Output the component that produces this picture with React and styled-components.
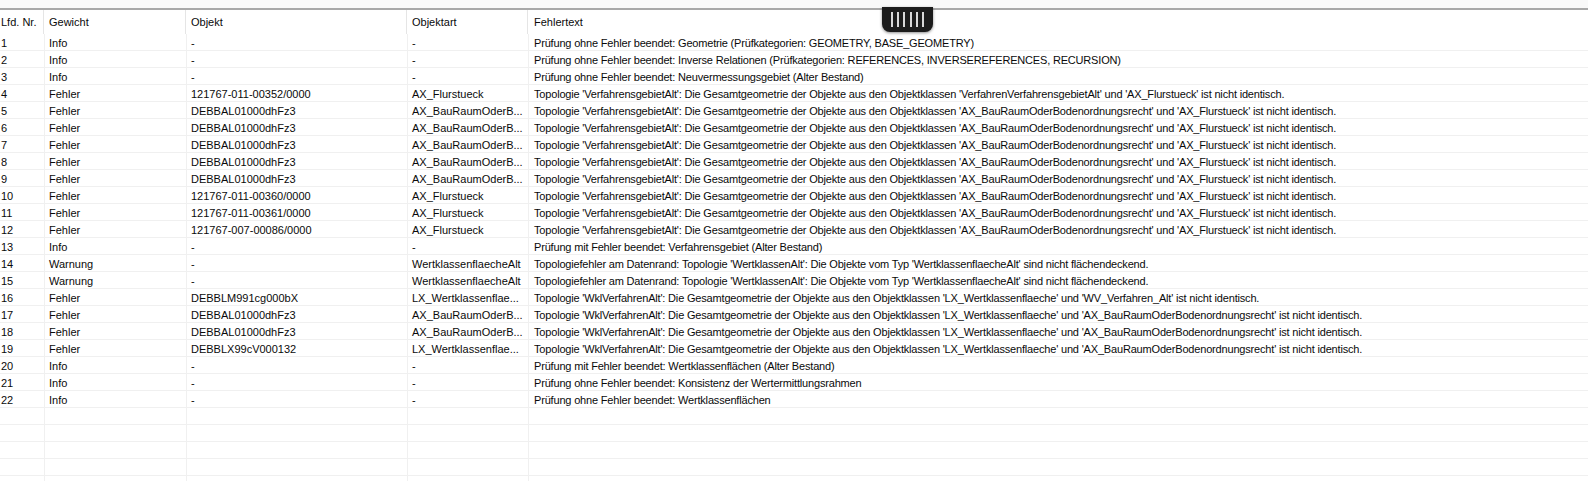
import React from 'react'
import styled, {createGlobalStyle} from 'styled-components'

const GlobalStyle = createGlobalStyle`
    html, body {
        margin: 0;
        padding: 0;
        background: #fff;
        overflow: hidden;
    }
`

const Page = styled.div`
    position: relative;
    width: 1588px;
    height: 481px;
    overflow: hidden;
    background: #fff;
    color: #0a0a0a;
    font-family: "Liberation Sans", Arial, sans-serif;
    font-size: 11px;
`

const TopStrip = styled.div`
    height: 8px;
    background: #f9f9f9;
    border-bottom: 2px solid #a8a8a8;
`

const HeaderRow = styled.div`
    display: grid;
    grid-template-columns: 44px 142px 221px 121px 1fr;
    height: 24px;
`

const HeaderCell = styled.div`
    display: flex;
    align-items: center;
    padding-left: ${p => p.$pad}px;
    border-right: ${p => (p.$last ? 'none' : '1px solid #e5e5e5')};
    white-space: nowrap;
`

const Row = styled.div`
    display: grid;
    grid-template-columns: 45px 142px 221px 121px 1fr;
    height: 17px;
    box-sizing: border-box;
    border-bottom: 1px solid #f0f0f0;
`

const Cell = styled.div`
    display: flex;
    align-items: center;
    padding-left: ${p => p.$pad}px;
    padding-top: 1px;
    border-right: ${p => (p.$last ? 'none' : '1px solid #f0f0f0')};
    letter-spacing: ${p => (p.$last ? '-0.18px' : 'normal')};
    white-space: nowrap;
    overflow: hidden;
`

const Handle = styled.div`
    position: absolute;
    left: 882px;
    top: 7px;
    width: 51px;
    height: 25px;
    display: flex;
    justify-content: center;
    align-items: center;
    gap: 4.4px;
    background: #1c1c1c;
    border-radius: 0 0 8px 8px;
    box-shadow: 0 1px 3px rgba(0, 0, 0, 0.45);
`

const Grip = styled.span`
    width: 2px;
    height: 15px;
    background: #d8d8d8;
`

const BAU = 'AX_BauRaumOderBodenordnungsrecht'
const topo = (a, b) => `Topologie 'VerfahrensgebietAlt': Die Gesamtgeometrie der Objekte aus den Objektklassen '${a}' und '${b}' ist nicht identisch.`
const wkl = b => `Topologie 'WklVerfahrenAlt': Die Gesamtgeometrie der Objekte aus den Objektklassen 'LX_Wertklassenflaeche' und '${b}' ist nicht identisch.`
const rand = "Topologiefehler am Datenrand: Topologie 'WertklassenAlt': Die Objekte vom Typ 'WertklassenflaecheAlt' sind nicht flächendeckend."

const rows = [
    ['Info', '-', '-', 'Prüfung ohne Fehler beendet: Geometrie (Prüfkategorien: GEOMETRY, BASE_GEOMETRY)'],
    ['Info', '-', '-', 'Prüfung ohne Fehler beendet: Inverse Relationen (Prüfkategorien: REFERENCES, INVERSEREFERENCES, RECURSION)'],
    ['Info', '-', '-', 'Prüfung ohne Fehler beendet: Neuvermessungsgebiet (Alter Bestand)'],
    ['Fehler', '121767-011-00352/0000', 'AX_Flurstueck', topo('VerfahrenVerfahrensgebietAlt', 'AX_Flurstueck')],
    ['Fehler', 'DEBBAL01000dhFz3', 'AX_BauRaumOderB...', topo(BAU, 'AX_Flurstueck')],
    ['Fehler', 'DEBBAL01000dhFz3', 'AX_BauRaumOderB...', topo(BAU, 'AX_Flurstueck')],
    ['Fehler', 'DEBBAL01000dhFz3', 'AX_BauRaumOderB...', topo(BAU, 'AX_Flurstueck')],
    ['Fehler', 'DEBBAL01000dhFz3', 'AX_BauRaumOderB...', topo(BAU, 'AX_Flurstueck')],
    ['Fehler', 'DEBBAL01000dhFz3', 'AX_BauRaumOderB...', topo(BAU, 'AX_Flurstueck')],
    ['Fehler', '121767-011-00360/0000', 'AX_Flurstueck', topo(BAU, 'AX_Flurstueck')],
    ['Fehler', '121767-011-00361/0000', 'AX_Flurstueck', topo(BAU, 'AX_Flurstueck')],
    ['Fehler', '121767-007-00086/0000', 'AX_Flurstueck', topo(BAU, 'AX_Flurstueck')],
    ['Info', '-', '-', 'Prüfung mit Fehler beendet: Verfahrensgebiet (Alter Bestand)'],
    ['Warnung', '-', 'WertklassenflaecheAlt', rand],
    ['Warnung', '-', 'WertklassenflaecheAlt', rand],
    ['Fehler', 'DEBBLM991cg000bX', 'LX_Wertklassenflae...', wkl('WV_Verfahren_Alt')],
    ['Fehler', 'DEBBAL01000dhFz3', 'AX_BauRaumOderB...', wkl(BAU)],
    ['Fehler', 'DEBBAL01000dhFz3', 'AX_BauRaumOderB...', wkl(BAU)],
    ['Fehler', 'DEBBLX99cV000132', 'LX_Wertklassenflae...', wkl(BAU)],
    ['Info', '-', '-', 'Prüfung mit Fehler beendet: Wertklassenflächen (Alter Bestand)'],
    ['Info', '-', '-', 'Prüfung ohne Fehler beendet: Konsistenz der Wertermittlungsrahmen'],
    ['Info', '-', '-', 'Prüfung ohne Fehler beendet: Wertklassenflächen'],
]

const headers = [
    ['Lfd. Nr.', 1],
    ['Gewicht', 5],
    ['Objekt', 5],
    ['Objektart', 5],
    ['Fehlertext', 6],
]

const App = () => (
    <Page>
        <GlobalStyle />
        <TopStrip />
        <HeaderRow>
            {headers.map(([label, pad], i) => (
                <HeaderCell key={label} $pad={pad} $last={i === headers.length - 1}>
                    {label}
                </HeaderCell>
            ))}
        </HeaderRow>
        {rows.map(([weight, object, kind, text], i) => (
            <Row key={i}>
                <Cell $pad={1}>{i + 1}</Cell>
                <Cell $pad={4}>{weight}</Cell>
                <Cell $pad={4}>{object}</Cell>
                <Cell $pad={4}>{kind}</Cell>
                <Cell $pad={5} $last>{text}</Cell>
            </Row>
        ))}
        {[0, 1, 2, 3, 4].map(i => (
            <Row key={i}>
                <Cell />
                <Cell />
                <Cell />
                <Cell />
                <Cell $last />
            </Row>
        ))}
        <Handle>
            {[0, 1, 2, 3, 4, 5].map(i => (
                <Grip key={i} />
            ))}
        </Handle>
    </Page>
)

export default App
